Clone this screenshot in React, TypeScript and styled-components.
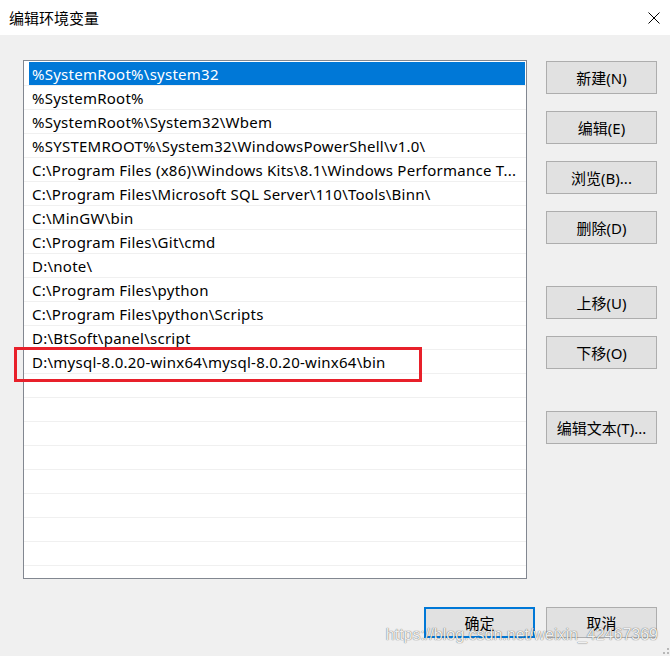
import React from 'react';
import styled, { createGlobalStyle, css } from 'styled-components';

const GlobalStyle = createGlobalStyle`
  html, body { margin: 0; padding: 0; background: #f0f0f0; }
  * { box-sizing: border-box; }
`;

const FONT = `"Noto Sans", "Noto Sans CJK SC", sans-serif`;

const Window = styled.div`
  position: relative;
  width: 670px;
  height: 656px;
  background: #f0f0f0;
  display: flex;
  flex-direction: column;
  font-family: ${FONT};
  font-size: 15px;
  color: #000;
  overflow: hidden;
`;

const TitleBar = styled.div`
  height: 35px;
  flex-shrink: 0;
  background: #fff;
  display: flex;
  align-items: center;
  justify-content: space-between;
  padding: 0 10px 0 9px;
`;

const Title = styled.span`
  font-family: "Noto Sans CJK SC", sans-serif;
  font-size: 15px;
  line-height: 1;
`;

const CloseBtn = styled.button`
  background: none;
  border: none;
  padding: 0;
  width: 12px;
  height: 12px;
  display: flex;
  margin-top: 1px;
`;

const Body = styled.div`
  display: flex;
  padding: 25px 13px 0 23px;
  gap: 19px;
`;

const PathList = styled.div`
  width: 504px;
  height: 519px;
  background: #fff;
  border: 1px solid #828790;
  padding-top: 1px;
  overflow: hidden;
`;

const Row = styled.div`
  height: 24px;
  border-bottom: 1px solid #f0f0f0;
  padding: 0 1px 0 5px;
`;

const Item = styled.div<{ $selected?: boolean }>`
  height: 100%;
  display: flex;
  align-items: center;
  padding: 1px 0 0 3px;
  letter-spacing: 0.25px;
  white-space: nowrap;
  overflow: hidden;
  ${p => p.$selected && css`
    background: #0078d7;
    color: #fff;
  `}
`;

const Side = styled.div`
  display: flex;
  flex-direction: column;
  gap: 17px;
  padding-top: 1px;
`;

const Btn = styled.button<{ $spaced?: boolean; $default?: boolean }>`
  width: 111px;
  height: 33px;
  background: #e1e1e1;
  border: 1px solid #adadad;
  font-family: ${FONT};
  font-size: 15px;
  color: #000;
  padding: 0;
  display: flex;
  align-items: center;
  justify-content: center;
  cursor: default;
  ${p => p.$spaced && css`margin-top: 25px;`}
  ${p => p.$default && css`border: 2px solid #0078d7;`}
`;

const Footer = styled.div`
  display: flex;
  justify-content: flex-end;
  gap: 11px;
  padding: 0 13px 0 0;
  margin-top: 28px;

  ${Btn} { height: 31px; }
`;

const Marker = styled.div`
  position: absolute;
  left: 14px;
  top: 347px;
  width: 408px;
  height: 35px;
  border: 3px solid #e8202a;
  pointer-events: none;
`;

const Watermark = styled.div`
  position: absolute;
  right: 12px;
  top: 626px;
  font-family: "Liberation Sans", Arial, sans-serif;
  font-size: 16px;
  color: rgba(255, 255, 255, 0.92);
  text-shadow: 0 0 1px rgba(0, 0, 0, 0.5), 0 0 1px rgba(0, 0, 0, 0.35);
  pointer-events: none;
  white-space: nowrap;
`;

const Grip = styled.svg`
  position: absolute;
  right: 1px;
  bottom: 2px;
`;

const paths = [
  '%SystemRoot%\\system32',
  '%SystemRoot%',
  '%SystemRoot%\\System32\\Wbem',
  '%SYSTEMROOT%\\System32\\WindowsPowerShell\\v1.0\\',
  'C:\\Program Files (x86)\\Windows Kits\\8.1\\Windows Performance T...',
  'C:\\Program Files\\Microsoft SQL Server\\110\\Tools\\Binn\\',
  'C:\\MinGW\\bin',
  'C:\\Program Files\\Git\\cmd',
  'D:\\note\\',
  'C:\\Program Files\\python',
  'C:\\Program Files\\python\\Scripts',
  'D:\\BtSoft\\panel\\script',
  'D:\\mysql-8.0.20-winx64\\mysql-8.0.20-winx64\\bin',
];

const rows = [...paths, ...Array(9).fill('')];

const sideButtons = [
  { label: '新建(N)' },
  { label: '编辑(E)' },
  { label: '浏览(B)...' },
  { label: '删除(D)' },
  { label: '上移(U)', spaced: true },
  { label: '下移(O)' },
  { label: '编辑文本(T)...', spaced: true },
];

export default function App() {
  return (
    <Window>
      <GlobalStyle />
      <TitleBar>
        <Title>编辑环境变量</Title>
        <CloseBtn aria-label="关闭">
          <svg width="12" height="12" viewBox="0 0 12 12">
            <path d="M0.5 0.5 L11.5 11.5 M11.5 0.5 L0.5 11.5" stroke="#000" strokeWidth="1" />
          </svg>
        </CloseBtn>
      </TitleBar>

      <Body>
        <PathList>
          {rows.map((p, i) => (
            <Row key={i}>
              <Item $selected={i === 0}>{p}</Item>
            </Row>
          ))}
        </PathList>

        <Side>
          {sideButtons.map(b => (
            <Btn key={b.label} $spaced={b.spaced}>{b.label}</Btn>
          ))}
        </Side>
      </Body>

      <Footer>
        <Btn $default>确定</Btn>
        <Btn>取消</Btn>
      </Footer>

      <Marker />
      <Watermark>https://blog.csdn.net/weixin_42467369</Watermark>
      <Grip width="6" height="6" viewBox="0 0 6 6">
        <rect x="4" y="0" width="2" height="2" fill="#b8b8b8" />
        <rect x="0" y="4" width="2" height="2" fill="#b8b8b8" />
        <rect x="4" y="4" width="2" height="2" fill="#b8b8b8" />
      </Grip>
    </Window>
  );
}
